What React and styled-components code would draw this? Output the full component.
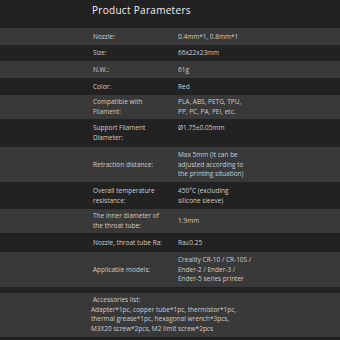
import React from 'react';
import styled, { createGlobalStyle } from 'styled-components';

const GlobalStyle = createGlobalStyle`
    html, body {
        margin: 0;
        padding: 0;
        background: #222222;
    }
`;

const Page = styled.section`
    width: 340px;
    height: 340px;
    overflow: hidden;
    background: #222222;
    font-family: 'Open Sans', 'Liberation Sans', sans-serif;
    color: #cdcdcd;
    display: flex;
    flex-direction: column;
`;

const Title = styled.h2`
    margin: 0;
    height: 28px;
    padding-left: 92px;
    font-size: 10px;
    font-weight: 400;
    line-height: 20px;
    color: #f0f0f0;
    letter-spacing: 0.3px;
`;

const Row = styled.div`
    display: grid;
    grid-template-columns: 93px 85px 1fr;
    align-items: ${({ $top }) => ($top ? 'start' : 'center')};
    height: ${({ $h }) => $h}px;
    box-sizing: border-box;
    padding-top: ${({ $top }) => ($top ? 4 : 0)}px;
    background: ${({ $light }) => ($light ? '#393939' : '#222222')};
    font-size: 6.5px;
    line-height: 9.6px;
`;

const Label = styled.div`
    grid-column: 2;
`;

const Value = styled.div`
    grid-column: 3;
`;

const Divider = styled.div`
    height: ${({ $h }) => $h}px;
    background: #222222;
`;

const ListBlock = styled.div`
    height: 44px;
    box-sizing: border-box;
    padding: 2px 0 0 91px;
    background: #393939;
    font-size: 6.5px;
    line-height: 9.6px;
`;

const ListTitle = styled.div`
    padding-left: 2px;
`;

const rows = [
    { h: 17, label: ['Nozzle:'], value: ['0.4mm*1, 0.8mm*1'] },
    { h: 16, label: ['Size:'], value: ['66x22x23mm'] },
    { h: 17, label: ['N.W.:'], value: ['61g'] },
    { h: 17, label: ['Color:'], value: ['Red'] },
    { h: 24, label: ['Compatible with', 'Filament:'], value: ['PLA, ABS, PETG, TPU,', 'PP, PC, PA, PEI, etc.'] },
    { h: 28, top: true, label: ['Support Filament', 'Diameter:'], value: ['Ø1.75±0.05mm'] },
    { h: 35, label: ['Retraction distance:'], value: ['Max 5mm (It can be', 'adjusted according to', 'the printing situation)'] },
    { h: 27, label: ['Overall temperature', 'resistance:'], value: ['450°C (excluding', 'silicone sleeve)'] },
    { h: 24, label: ['The inner diameter of', 'the throat tube:'], value: ['1.9mm'] },
    { h: 19, label: ['Nozzle, throat tube Ra:'], value: ['Ra≤0.25'] },
    { h: 35, label: ['Applicable models:'], value: ['Creality CR-10 / CR-10S /', 'Ender-2 / Ender-3 /', 'Ender-5 series printer'] },
];

const Lines = ({ lines }) =>
    lines.map((line, i) => (
        <React.Fragment key={i}>
            {i > 0 && <br />}
            {line}
        </React.Fragment>
    ));

const App = () => (
    <Page>
        <GlobalStyle />
        <Title>Product Parameters</Title>
        {rows.map((row, i) => (
            <Row key={i} $h={row.h} $top={row.top} $light={i % 2 === 0}>
                <Label>
                    <Lines lines={row.label} />
                </Label>
                <Value>
                    <Lines lines={row.value} />
                </Value>
            </Row>
        ))}
        <Divider $h={6} />
        <ListBlock>
            <ListTitle>Accessories list:</ListTitle>
            Adapter*1pc, copper tube*1pc, thermistor*1pc,
            <br />
            thermal grease*1pc, hexagonal wrench*3pcs,
            <br />
            M3X20 screw*2pcs, M2 limit screw*2pcs
        </ListBlock>
        <Divider $h={3} />
    </Page>
);

App.displayName = 'App';
export default App;
